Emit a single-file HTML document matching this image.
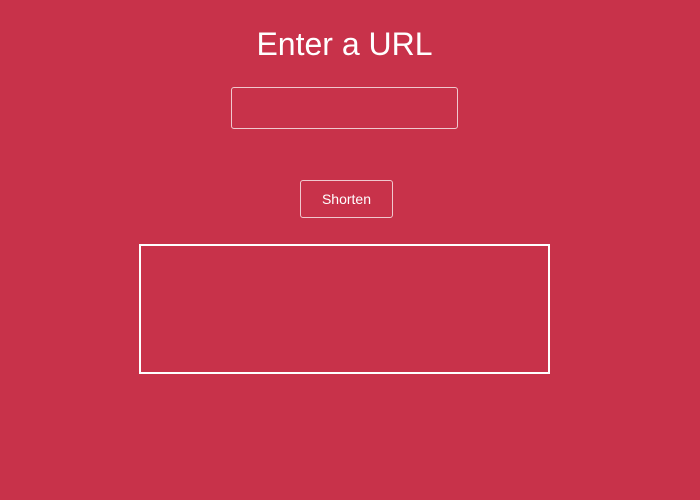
<!DOCTYPE html>
<html><head><style>
html,body{margin:0;padding:0;width:700px;height:500px;background:#c8324a;overflow:hidden;font-family:"Liberation Sans",sans-serif;}
.t{position:absolute;left:0;width:689px;text-align:center;top:26px;font-size:32px;color:#fff;}
.in{position:absolute;left:231px;top:87px;border:1px solid #f0c8ce;border-radius:3px;box-sizing:border-box;width:227px;height:42px;}
.b{position:absolute;left:300px;top:180px;width:93px;height:38px;box-sizing:border-box;border:1px solid #f0c8ce;border-radius:3px;color:#fff;font-size:14px;text-align:center;line-height:36px;}
.box{position:absolute;left:139px;top:244px;width:411px;height:130px;box-sizing:border-box;border:2px solid #fff;}
</style></head><body>
<div class="t">Enter a URL</div>
<div class="in"></div>
<div class="b">Shorten</div>
<div class="box"></div>
</body></html>
